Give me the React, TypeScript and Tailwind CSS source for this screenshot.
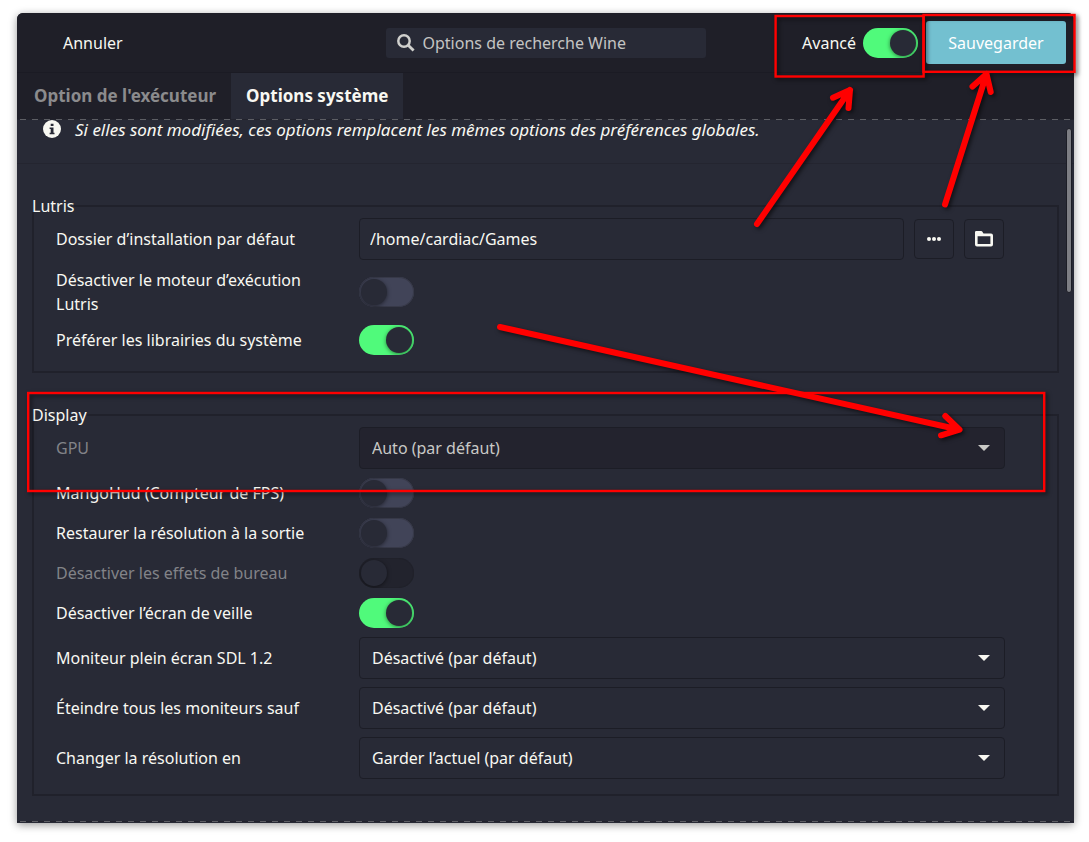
import { useState } from "react";
import type { ReactNode } from "react";

function Switch({ id, on = false, disabled = false }: { id: string; on?: boolean; disabled?: boolean }) {
  const [checked, setChecked] = useState(on);
  return (
    <input
      id={id}
      type="checkbox"
      role="switch"
      checked={checked}
      disabled={disabled}
      onChange={(e) => setChecked(e.target.checked)}
      className="block h-[30px] w-[55px] shrink-0 appearance-none overflow-hidden rounded-full bg-[#414458] p-[2px] shadow-[inset_0_0_0_1px_#373948] before:block before:size-[26px] before:rounded-full before:bg-[#282a36] before:shadow-[0_1px_4px_rgba(0,0,0,0.5)] before:content-[''] checked:bg-[#50fa7b] checked:shadow-none checked:before:ml-[25px] disabled:bg-[#22232d] disabled:shadow-[inset_0_0_0_1px_#20212a]"
    />
  );
}

function Row({ id, label, dim = false, children }: { id: string; label: string; dim?: boolean; children: ReactNode }) {
  return (
    <div className="grid min-h-8 grid-cols-[303px_1fr] items-center">
      <label htmlFor={id} className={dim ? "pr-4 text-[#828388]" : "pr-4"}>
        {label}
      </label>
      {children}
    </div>
  );
}

function Combo({ id, value, disabled = false }: { id: string; value: string; disabled?: boolean }) {
  return (
    <div className="relative">
      <select
        id={id}
        disabled={disabled}
        className="block h-[42px] w-full appearance-none rounded border border-[#1c1d26] bg-[#282a36] pl-3 text-[#f8f8f2] opacity-100 disabled:bg-[#23232e] disabled:text-[#c9c9c6]"
      >
        <option>{value}</option>
      </select>
      <svg
        viewBox="0 0 12 6"
        className={
          disabled
            ? "pointer-events-none absolute top-[18px] right-[15px] h-[6px] w-3 fill-[#c9c9c6]"
            : "pointer-events-none absolute top-[18px] right-[15px] h-[6px] w-3 fill-[#f8f8f2]"
        }
      >
        <path d="M0 0h12L6 6z" />
      </svg>
    </div>
  );
}

function Group({ title, children }: { title: string; children: ReactNode }) {
  return (
    <fieldset className="flex min-w-0 flex-col border-2 border-[#20212b] pt-[6px] pr-[52px] pb-[15px] pl-[22px]">
      <legend className="-ml-6 bg-[#282a36] leading-3">{title}</legend>
      <div className="flex flex-col gap-2">{children}</div>
    </fieldset>
  );
}

function Dashes() {
  return (
    <div className="h-px bg-[repeating-linear-gradient(90deg,#22232d_0px,#22232d_3px,#5d5e64_3px,#5d5e64_9px,#22232d_9px,#22232d_12px)]" />
  );
}

function Annotations() {
  return (
    <svg
      className="pointer-events-none absolute top-0 left-0 h-[842px] w-[1089px] drop-shadow-[2px_2px_2px_rgba(0,0,0,0.6)]"
      viewBox="0 0 1089 842"
      fill="none"
      stroke="#ff0000"
    >
      <g strokeWidth="2.4">
        <rect x="775.6" y="16" width="148" height="60.5" />
        <rect x="923.5" y="15" width="151" height="56.8" />
        <rect x="28.2" y="393" width="1016" height="98" />
      </g>
      <g strokeWidth="6" strokeLinecap="round" strokeLinejoin="round">
        <path d="M757 224L850 90M833 97.7L850 90L848.5 108" />
        <path d="M945 204.5L986.5 74M972.5 86.5L986.5 74L990.7 92" />
        <path d="M500 327L959.5 429.7M945.3 416L959.5 429.7L941 435.3" />
      </g>
    </svg>
  );
}

export default function App() {
  return (
    <div className="relative min-h-screen bg-white pt-[13px] pr-[15px] pb-[19px] pl-[17px] font-['Noto_Sans',sans-serif] text-base leading-6 text-[#f8f8f2]">
      <div className="overflow-hidden rounded-t-md bg-[#282a36] shadow-[0_2px_8px_rgba(0,0,0,0.4)]">
        <header className="grid grid-cols-[1fr_320px_1fr] items-center border-b border-[#1b1b24] bg-[#1f1f28] p-2">
          <div>
            <button type="button" className="h-[43px] px-[38px]">
              Annuler
            </button>
          </div>
          <div className="flex h-[30px] items-center gap-2 rounded-[3px] bg-[#282a36] px-[11px]">
            <svg viewBox="0 0 18 18" className="size-[18px] shrink-0" fill="none" stroke="#d0d0cd">
              <circle cx="7" cy="7" r="5.7" strokeWidth="2.5" />
              <path d="M11.2 11.2L16.6 16.6" strokeWidth="2.8" />
            </svg>
            <input
              type="text"
              aria-label="Options de recherche Wine"
              placeholder="Options de recherche Wine"
              className="min-w-0 flex-1 bg-transparent outline-none placeholder:text-[#c4c4c3]"
            />
          </div>
          <div className="flex items-center justify-end">
            <label htmlFor="advanced" className="mr-[7px]">
              Avancé
            </label>
            <Switch id="advanced" on />
            <button type="button" className="ml-2 h-[43px] w-[140px] rounded-[3px] bg-[#73c0d0] text-white">
              Sauvegarder
            </button>
          </div>
        </header>

        <nav className="flex h-[46px] bg-[#1f1f28] pl-[2px] text-[17px] font-bold">
          <button type="button" className="px-[15px] text-[#8b8b8d]">
            Option de l'exécuteur
          </button>
          <button type="button" className="bg-[#282a36] px-[15px]">
            Options système
          </button>
        </nav>
        <Dashes />

        <main className="relative pb-[25px]">
          <div className="flex h-11 items-start border-b border-[#242530] pl-[26px]">
            <svg viewBox="0 0 18 18" className="size-[18px] shrink-0">
              <circle cx="9" cy="9" r="9" fill="#f8f8f2" />
              <path d="M7.7 3.7h2.8v2.4H7.7zM6.6 7.4h3.9v5.3h1v1.5H6.6v-1.5h1.1V8.9H6.6z" fill="#282a36" />
            </svg>
            <p className="ml-[14px] text-[17px] leading-5 italic">
              Si elles sont modifiées, ces options remplacent les mêmes options des préférences globales.
            </p>
          </div>

          <div className="flex flex-col gap-9 px-[15px] pt-9">
            <Group title="Lutris">
              <Row id="folder" label="Dossier d’installation par défaut">
                <div className="flex items-center gap-[10px] pr-px">
                  <input
                    id="folder"
                    type="text"
                    defaultValue="/home/cardiac/Games"
                    className="h-[42px] min-w-0 flex-1 rounded border border-[#1c1d26] bg-transparent px-[10px] outline-none"
                  />
                  <button
                    type="button"
                    aria-label="Parcourir"
                    className="grid size-10 shrink-0 place-items-center rounded border border-[#1c1d26]"
                  >
                    <svg viewBox="0 0 14 4" className="h-1 w-[14px] fill-[#f8f8f2]">
                      <circle cx="2" cy="2" r="2" />
                      <circle cx="7" cy="2" r="2" />
                      <circle cx="12" cy="2" r="2" />
                    </svg>
                  </button>
                  <button
                    type="button"
                    aria-label="Ouvrir le dossier"
                    className="grid size-10 shrink-0 place-items-center rounded border border-[#1c1d26]"
                  >
                    <svg viewBox="0 0 18 16" className="h-4 w-[18px]">
                      <path
                        fill="#f8f8f2"
                        fillRule="evenodd"
                        d="M1.2 0h5a1.2 1.2 0 0 1 1 .5L8.5 2.6H16a2 2 0 0 1 2 2V13.5a2 2 0 0 1-2 2H2a2 2 0 0 1-2-2V1.2A1.2 1.2 0 0 1 1.2 0zM2.6 5.3v7.6h12.8V5.3z"
                      />
                    </svg>
                  </button>
                </div>
              </Row>
              <Row id="runtime" label="Désactiver le moteur d’exécution Lutris">
                <Switch id="runtime" />
              </Row>
              <Row id="syslibs" label="Préférer les librairies du système">
                <Switch id="syslibs" on />
              </Row>
            </Group>

            <Group title="Display">
              <Row id="gpu" label="GPU" dim>
                <Combo id="gpu" value="Auto (par défaut)" disabled />
              </Row>
              <Row id="mangohud" label="MangoHud (Compteur de FPS)">
                <Switch id="mangohud" />
              </Row>
              <Row id="restore" label="Restaurer la résolution à la sortie">
                <Switch id="restore" />
              </Row>
              <Row id="effects" label="Désactiver les effets de bureau" dim>
                <Switch id="effects" disabled />
              </Row>
              <Row id="screensaver" label="Désactiver l’écran de veille">
                <Switch id="screensaver" on />
              </Row>
              <Row id="sdl" label="Moniteur plein écran SDL 1.2">
                <Combo id="sdl" value="Désactivé (par défaut)" />
              </Row>
              <Row id="monitors" label="Éteindre tous les moniteurs sauf">
                <Combo id="monitors" value="Désactivé (par défaut)" />
              </Row>
              <Row id="resolution" label="Changer la résolution en">
                <Combo id="resolution" value="Garder l’actuel (par défaut)" />
              </Row>
            </Group>
          </div>

          <div className="absolute top-[8px] right-[2px] h-[165px] w-[6px] rounded-full border border-[#1c1d26] bg-[#7d7e84]" />
        </main>
        <Dashes />
        <div className="h-px" />
      </div>
      <Annotations />
    </div>
  );
}
